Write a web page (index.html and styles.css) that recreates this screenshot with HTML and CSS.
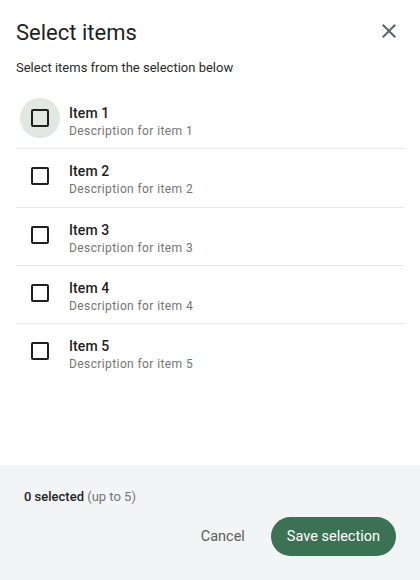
FILE: index.html
```html
<!DOCTYPE html>
<html lang="en">
<head>
<meta charset="utf-8">
<title>Select items</title>
<link rel="stylesheet" href="styles.css">
</head>
<body>
<div class="dialog">
  <div class="header">
    <h1 class="title">Select items</h1>
    <button class="close" aria-label="Close">
      <svg width="24" height="24" viewBox="0 0 24 24"><path d="M19 6.41 17.59 5 12 10.59 6.41 5 5 6.41 10.59 12 5 17.59 6.41 19 12 13.41 17.59 19 19 17.59 13.41 12z" fill="currentColor"/></svg>
    </button>
  </div>
  <p class="subtitle">Select items from the selection below</p>
  <ul class="list">
    <li class="row">
      <span class="check-wrap focused"><span class="box"></span></span>
      <span class="text"><span class="name">Item 1</span><span class="desc">Description for item 1</span></span>
    </li>
    <li class="row">
      <span class="check-wrap"><span class="box"></span></span>
      <span class="text"><span class="name">Item 2</span><span class="desc">Description for item 2</span></span>
    </li>
    <li class="row">
      <span class="check-wrap"><span class="box"></span></span>
      <span class="text"><span class="name">Item 3</span><span class="desc">Description for item 3</span></span>
    </li>
    <li class="row">
      <span class="check-wrap"><span class="box"></span></span>
      <span class="text"><span class="name">Item 4</span><span class="desc">Description for item 4</span></span>
    </li>
    <li class="row">
      <span class="check-wrap"><span class="box"></span></span>
      <span class="text"><span class="name">Item 5</span><span class="desc">Description for item 5</span></span>
    </li>
  </ul>
  <div class="footer">
    <div class="status"><strong>0 selected</strong> <span class="limit">(up to 5)</span></div>
    <div class="actions">
      <button class="btn btn-text">Cancel</button>
      <button class="btn btn-primary">Save selection</button>
    </div>
  </div>
</div>
</body>
</html>
```
FILE: styles.css
```css
* { box-sizing: border-box; }
html, body { margin: 0; padding: 0; background: #fff; }
body {
  font-family: Roboto, "Liberation Sans", sans-serif;
  color: #1f1f1f;
}
.dialog {
  width: 420px;
  height: 580px;
  display: flex;
  flex-direction: column;
}
.header {
  display: flex;
  align-items: flex-start;
  justify-content: space-between;
  padding: 18px 19px 0 16px;
}
.title {
  margin: 0;
  font-size: 22px;
  line-height: 30px;
  font-weight: 400;
  color: #1f1f1f;
}
.close {
  border: 0;
  background: none;
  padding: 0;
  margin-top: 1px;
  width: 24px;
  height: 24px;
  color: #5f6368;
  cursor: pointer;
}
.close svg { display: block; }
.subtitle {
  margin: 10px 16px 0;
  font-size: 13px;
  line-height: 20px;
  color: #2a2a2a;
}
.list {
  list-style: none;
  margin: 13px 16px 0;
  padding: 0;
}
.row {
  display: flex;
  align-items: flex-start;
  gap: 9px;
  height: 58.33px;
  padding: 7px 0 0 4px;
  border-bottom: 1px solid #e8e8e8;
}
.row:last-child { border-bottom: 0; }
.check-wrap {
  width: 40px;
  height: 40px;
  border-radius: 50%;
  display: flex;
  align-items: center;
  justify-content: center;
  flex: none;
}
.check-wrap.focused { background: #e2e7e3; }
.box {
  width: 18px;
  height: 18px;
  border: 2px solid #1f1f1f;
  border-radius: 2px;
}
.text {
  display: flex;
  flex-direction: column;
  margin-top: 5px;
}
.name {
  font-size: 14px;
  line-height: 20px;
  font-weight: 500;
  color: #1f1f1f;
  letter-spacing: 0.1px;
}
.desc {
  font-size: 12px;
  line-height: 16px;
  color: #757575;
  letter-spacing: 0.4px;
}
.footer {
  margin-top: auto;
  background: #f3f4f6;
  padding: 24px 24px 24px 24px;
  display: flex;
  flex-direction: column;
  gap: 12px;
}
.status {
  font-size: 13px;
  line-height: 16px;
  color: #1f1f1f;
}
.status strong { font-weight: 500; }
.limit { color: #757575; }
.actions {
  display: flex;
  justify-content: flex-end;
  gap: 10px;
}
.btn {
  font-family: inherit;
  font-size: 14.5px;
  height: 39px;
  padding: 0 16px;
  border-radius: 20px;
  border: 0;
  cursor: pointer;
}
.btn-text {
  background: none;
  color: #5c5c5c;
}
.btn-primary {
  background: #3b7254;
  color: #fff;
}
```
